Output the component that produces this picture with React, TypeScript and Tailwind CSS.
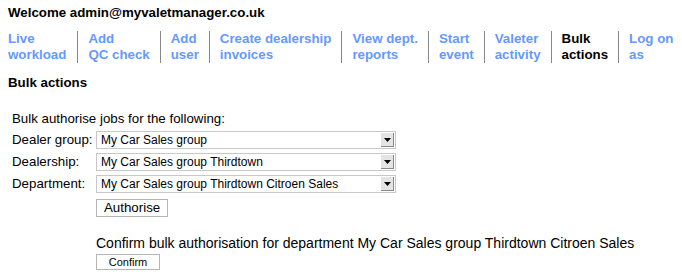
const links: { top: string; bottom: string; active?: boolean }[] = [
  { top: 'Live', bottom: 'workload' },
  { top: 'Add', bottom: 'QC check' },
  { top: 'Add', bottom: 'user' },
  { top: 'Create dealership', bottom: 'invoices' },
  { top: 'View dept.', bottom: 'reports' },
  { top: 'Start', bottom: 'event' },
  { top: 'Valeter', bottom: 'activity' },
  { top: 'Bulk', bottom: 'actions', active: true },
  { top: 'Log on', bottom: 'as' },
];

function FakeSelect({ value }: { value: string }) {
  return (
    <div className="flex h-[18px] w-[300px] items-center border border-[#c8c8c8] bg-white pl-[4px] pr-[1px]">
      <span className="flex-1 truncate text-[12px] leading-4">{value}</span>
      <span className="flex h-[14px] w-[13px] items-center justify-center border-r border-b border-[#8a8a8a] bg-[#e4e4e4]">
        <svg width="7" height="4" viewBox="0 0 7 4">
          <path d="M0 0h7L3.5 4z" fill="#000" />
        </svg>
      </span>
    </div>
  );
}

export default function App() {
  return (
    <div className="min-h-[278px] bg-white px-2 pt-[5px] font-['Liberation_Sans',Arial,sans-serif] text-[13.3px] leading-4 text-black">
      <div className="font-bold">Welcome admin@myvaletmanager.co.uk</div>

      <nav className="mt-[10px] flex whitespace-nowrap font-bold">
        {links.map((l, i) => (
          <a
            key={i}
            href="#"
            className={
              'shrink-0 ' +
              (i === 0 ? 'pr-[11px] ' : 'border-l border-[#888] pl-[10px] pr-[10px] ') +
              (l.active ? 'text-black' : 'text-[#6699ff]')
            }
          >
            <div>{l.top}</div>
            <div>{l.bottom}</div>
          </a>
        ))}
      </nav>

      <div className="mt-[12px] font-bold">Bulk actions</div>

      <div className="mt-[20px] pl-1">
        <div>Bulk authorise jobs for the following:</div>
        <div className="mt-1 flex flex-col gap-1">
          {[
            ['Dealer group:', 'My Car Sales group'],
            ['Dealership:', 'My Car Sales group Thirdtown'],
            ['Department:', 'My Car Sales group Thirdtown Citroen Sales'],
          ].map(([label, value]) => (
            <div key={label} className="flex items-center">
              <span className="w-[84px]">{label}</span>
              <FakeSelect value={value} />
            </div>
          ))}
        </div>

        <div className="ml-[84px] mt-[6px]">
          <button className="h-[18px] border border-[#b5b5b5] bg-white px-[7px] text-[13.3px] leading-4">
            Authorise
          </button>
        </div>

        <div className="ml-[84px] mt-[18px]">
          <div className="text-[14px]">
            Confirm bulk authorisation for department My Car Sales group Thirdtown Citroen Sales
          </div>
          <button className="mt-[3px] h-[16px] w-[64px] border border-[#b5b5b5] bg-white text-[11px] leading-3">
            Confirm
          </button>
        </div>
      </div>
    </div>
  );
}
